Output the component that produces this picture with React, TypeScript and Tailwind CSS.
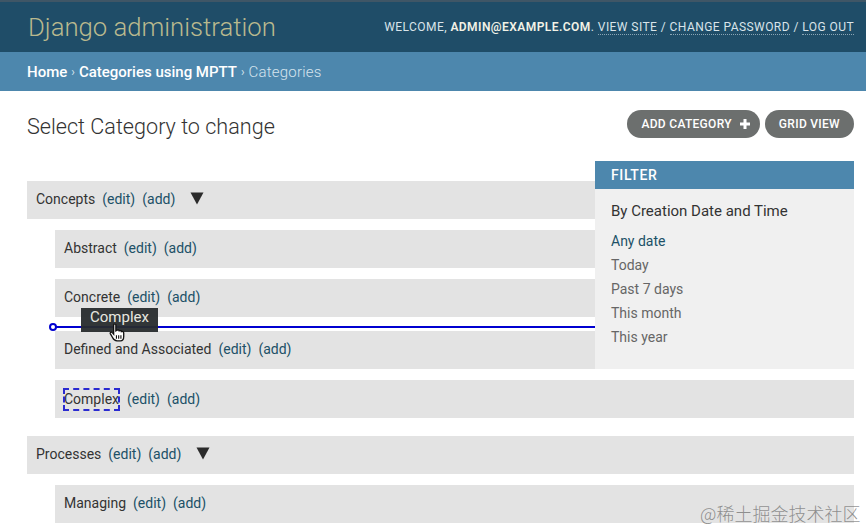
import React from "react";

const rows = [
  { name: "Concepts", depth: 0, arrow: true, h: "mt-0" },
  { name: "Abstract", depth: 1, h: "mt-[11px]" },
  { name: "Concrete", depth: 1, h: "mt-[11px]" },
  { name: "Defined and Associated", depth: 1, h: "mt-[14px]" },
  { name: "Complex", depth: 1, focus: true, h: "mt-[11px]" },
  { name: "Processes", depth: 0, arrow: true, h: "mt-[18px]" },
  { name: "Managing", depth: 1, h: "mt-[11px]" },
];

const Row = ({ row }: { row: (typeof rows)[number] }) => (
  <div
    className={`${row.h} ${row.depth ? "ml-[28px]" : ""} ${row.focus ? "" : "pb-[2px]"} flex h-[38px] items-center bg-[#e3e3e3] text-[14px] text-[#333]`}
  >
    <span
      className={
        row.focus
          ? "ml-[9px] mr-[1px] leading-[21px] outline-2 outline-offset-[-1px] outline-dashed outline-[#2a2ad0]"
          : "ml-[9px]"
      }
    >
      {row.name}
    </span>
    <a className="ml-[7px] text-[#205067]">(edit)</a>
    <a className="ml-[7px] text-[#205067]">(add)</a>
    {row.arrow && (
      <svg width="14" height="13" viewBox="0 0 14 13" className="mb-[1px] ml-[15px]">
        <path d="M0.5 0.5H13.5L7 12.5Z" fill="#2b2b2b" />
      </svg>
    )}
  </div>
);

export default function App() {
  return (
    <div className="relative h-[530px] w-[866px] overflow-hidden bg-white font-['Roboto',sans-serif]">
      <header className="flex h-[52px] items-center justify-between border-t-2 border-[#3f5666] bg-[#1f4d68] pl-[28px] pr-[12px]">
        <h1 className="text-[25.7px] font-light text-[#b9b98e]">Django administration</h1>
        <div className="text-[12px] tracking-[0.44px] text-[#d9e4ea]">
          WELCOME, <strong className="font-semibold text-[#f2f2e6]">ADMIN@EXAMPLE.COM</strong>.{" "}
          <a className="border-b border-dotted border-[#8aa5b5]">VIEW SITE</a> /{" "}
          <a className="border-b border-dotted border-[#8aa5b5]">CHANGE PASSWORD</a> /{" "}
          <a className="border-b border-dotted border-[#8aa5b5]">LOG OUT</a>
        </div>
      </header>
      <nav className="flex h-[39px] items-center bg-[#4d87ad] pl-[27px] pt-[1px] text-[15px] text-[#d5e4ee]">
        <a className="font-medium text-white">Home</a>
        <span className="mx-[4px] text-[12px]">›</span>
        <a className="font-medium text-white">Categories using MPTT</a>
        <span className="mx-[4px] text-[12px]">›</span>
        <span className="font-light tracking-[0.2px]">Categories</span>
      </nav>
      <main className="px-[27px] pr-[12px]">
        <div className="flex h-[70px] items-center justify-between">
          <h2 className="pt-[2px] text-[21.6px] font-light text-[#333]">Select Category to change</h2>
          <div className="mb-[4px] flex gap-[5px]">
            <a className="flex h-[28px] items-center rounded-[14px] bg-[#6c6f6e] pl-[14px] pr-[9px] text-[12px] font-medium tracking-[0.3px] text-white">
              ADD CATEGORY
              <svg width="12" height="12" viewBox="0 0 12 12" className="ml-[7px]">
                <path d="M6 1V11M1 6H11" stroke="#fff" strokeWidth="3" />
              </svg>
            </a>
            <a className="flex h-[28px] items-center rounded-[14px] bg-[#6c6f6e] px-[14px] text-[12px] font-medium tracking-[0.3px] text-white">
              GRID VIEW
            </a>
          </div>
        </div>
        <div className="mt-[20px]">
          {rows.map((row) => (
            <Row key={row.name} row={row} />
          ))}
        </div>
      </main>

      <aside className="absolute left-[595px] top-[161px] h-[208px] w-[259px] bg-[#f0f0f0]">
        <h3 className="flex h-[28px] items-center bg-[#4d87ad] pl-[16px] text-[14px] font-medium tracking-[0.6px] text-white">
          FILTER
        </h3>
        <p className="mt-[12px] pl-[16px] text-[15px] leading-[20px] text-[#333]">By Creation Date and Time</p>
        <ul className="mt-[8px] pl-[16px] text-[14px] leading-[24px] text-[#666]">
          <li className="text-[#205067]">Any date</li>
          <li>Today</li>
          <li>Past 7 days</li>
          <li>This month</li>
          <li>This year</li>
        </ul>
      </aside>

      {/* drag indicator */}
      <div className="absolute left-[53px] top-[326px] h-[2px] w-[542px] bg-[#0000d0]" />
      <div className="absolute left-[49px] top-[323px] size-[8px] rounded-full border-2 border-[#0000d0] bg-white" />
      <div className="absolute left-[81px] top-[308px] flex h-[24px] w-[77px] items-start justify-center bg-[#272b2d]/95 text-[15px] leading-[18px] text-[#e8e8e0]">
        Complex
      </div>
      <svg width="16" height="19" viewBox="0 0 14 17" className="absolute left-[109px] top-[323px]">
        <path
          d="M4 1.5C4 .5 6 .5 6 1.5V7L7 6.5C8 6 9 6.5 9 7C10 6.6 11 7 11 7.6C12 7.3 13 8 13 9V12C13 14 12 16 10 16H7C5 16 4 15 3 13L1 9.5C.5 8.5 2 7.5 3 8.8L4 10Z"
          fill="#fff"
          stroke="#111"
          strokeWidth="1.2"
        />
        <path d="M6.5 11V14M8.5 11V14M10.5 11V14" stroke="#111" strokeWidth="1" />
      </svg>

      <div className="absolute left-[700px] top-[501px] font-['Noto_Sans_CJK_SC',sans-serif] text-[18px] font-light leading-[24px] text-[#777]/80">
        @稀土掘金技术社区
      </div>
    </div>
  );
}
